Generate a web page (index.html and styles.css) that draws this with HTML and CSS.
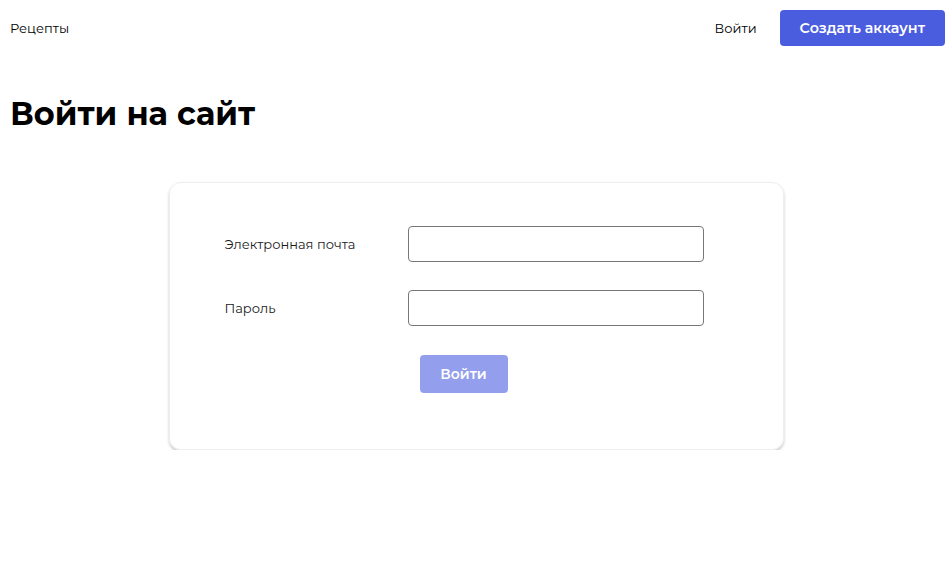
FILE: index.html
```html
<!DOCTYPE html>
<html lang="ru">
<head>
<meta charset="utf-8">
<title>Войти на сайт</title>
<link rel="stylesheet" href="styles.css">
</head>
<body>
<header class="header">
  <a class="brand" href="#">Рецепты</a>
  <nav class="nav">
    <a class="nav-link" href="#">Войти</a>
    <a class="btn-primary" href="#">Создать аккаунт</a>
  </nav>
</header>
<main class="main">
  <h1 class="title">Войти на сайт</h1>
  <form class="card">
    <div class="row">
      <label class="label">Электронная почта</label>
      <input class="input" type="email">
    </div>
    <div class="row">
      <label class="label">Пароль</label>
      <input class="input" type="password">
    </div>
    <div class="actions">
      <button class="btn-disabled" type="button">Войти</button>
    </div>
  </form>
</main>
</body>
</html>
```
FILE: styles.css
```css
* { box-sizing: border-box; }
body {
  margin: 0;
  font-family: "Montserrat", "DejaVu Sans", "Open Sans", sans-serif;
  color: #000;
  background: #fff;
}
a { color: inherit; text-decoration: none; }
.header {
  display: flex;
  justify-content: space-between;
  align-items: center;
  padding: 10px 2px 10px 10px;
}
.brand { font-size: 13px; }
.nav { display: flex; align-items: center; gap: 23px; }
.nav-link { font-size: 13px; }
.btn-primary {
  display: flex;
  align-items: center;
  height: 36px;
  padding: 0 20px;
  background: #4a5ddf;
  color: #fff;
  border-radius: 4px;
  font-size: 14.3px;
  font-weight: 600;
}
.main { padding: 0 5px 0 10px; }
.title {
  margin: 38px 0 48px;
  font-size: 32px;
  font-weight: 700;
  line-height: 40px;
}
.card {
  width: 615px;
  margin: 0 auto;
  padding: 43px 55px 56px;
  border: 1px solid #eee;
  border-radius: 12px;
  box-shadow: 0 2px 3px rgba(0,0,0,0.22);
  display: flex;
  flex-direction: column;
  gap: 28px;
}
.row { display: flex; align-items: center; }
.label { width: 183px; font-size: 13px; color: #1a1a1a; }
.input {
  width: 296px;
  height: 36px;
  border: 1px solid #777;
  border-radius: 4px;
}
.actions { padding-left: 195px; margin-top: 1px; }
.btn-disabled {
  width: 88px;
  height: 38px;
  border: none;
  border-radius: 4px;
  background: #939fec;
  color: #fff;
  font-family: inherit;
  font-size: 14px;
  font-weight: 600;
}
```
